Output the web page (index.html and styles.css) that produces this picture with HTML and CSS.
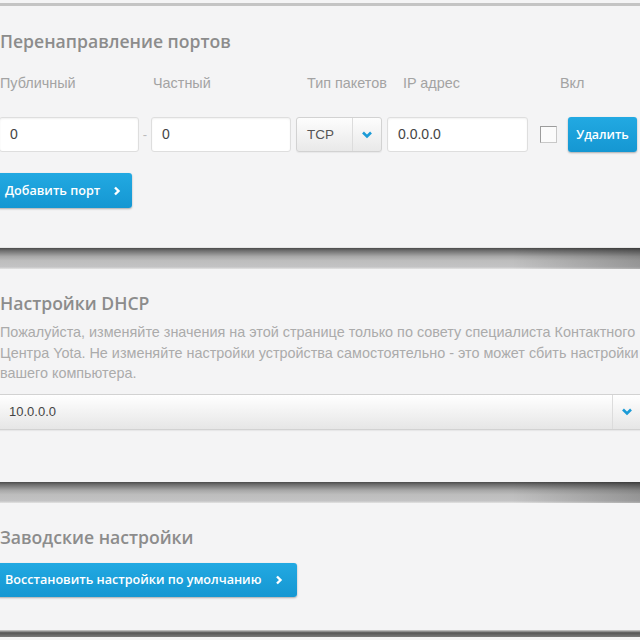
FILE: index.html
```html
<!DOCTYPE html>
<html lang="ru">
<head>
  <meta charset="UTF-8">
  <title>Настройки</title>
  <link rel="stylesheet" href="styles.css">
</head>
<body>

  <div class="top-line"></div>

  <!-- Port forwarding -->
  <section class="panel panel-ports">
    <h2 class="panel-title">Перенаправление портов</h2>

    <div class="labels">
      <span class="lbl lbl-public">Публичный</span>
      <span class="lbl lbl-private">Частный</span>
      <span class="lbl lbl-type">Тип пакетов</span>
      <span class="lbl lbl-ip">IP адрес</span>
      <span class="lbl">Вкл</span>
    </div>

    <div class="port-row">
      <div class="field field-port">0</div>
      <span class="dash">-</span>
      <div class="field field-port">0</div>
      <div class="select select-proto">
        <span class="select-value">TCP</span>
        <span class="select-arrow">
          <svg width="12" height="8" viewBox="0 0 12 8"><path d="M2 1.5 L6 5.5 L10 1.5" fill="none" stroke="#1b9bd7" stroke-width="2.6"/></svg>
        </span>
      </div>
      <div class="field field-ip">0.0.0.0</div>
      <span class="checkbox"></span>
      <button class="btn btn-small">Удалить</button>
    </div>

    <button class="btn btn-arrow">Добавить порт
      <svg width="8" height="10" viewBox="0 0 8 10"><path d="M2 1.5 L5.5 5 L2 8.5" fill="none" stroke="#fff" stroke-width="2.4"/></svg>
    </button>
  </section>

  <div class="divider"></div>

  <!-- DHCP -->
  <section class="panel panel-dhcp">
    <h2 class="panel-title">Настройки DHCP</h2>
    <p class="note">Пожалуйста, изменяйте значения на этой странице только по совету специалиста Контактного Центра Yota. Не изменяйте настройки устройства самостоятельно - это может сбить настройки вашего компьютера.</p>
    <div class="select select-wide">
      <span class="select-value">10.0.0.0</span>
      <span class="select-arrow">
        <svg width="12" height="8" viewBox="0 0 12 8"><path d="M2 1.5 L6 5.5 L10 1.5" fill="none" stroke="#1b9bd7" stroke-width="2.6"/></svg>
      </span>
    </div>
  </section>

  <div class="divider"></div>

  <!-- Factory reset -->
  <section class="panel panel-reset">
    <h2 class="panel-title">Заводские настройки</h2>
    <button class="btn btn-arrow btn-reset">Восстановить настройки по умолчанию
      <svg width="8" height="10" viewBox="0 0 8 10"><path d="M2 1.5 L5.5 5 L2 8.5" fill="none" stroke="#fff" stroke-width="2.4"/></svg>
    </button>
  </section>

  <div class="bottom-line"></div>

</body>
</html>
```

FILE: styles.css
```css
body {
  margin: 0;
  background: #f4f4f5;
  font-family: "Liberation Sans", Arial, sans-serif;
  overflow: hidden;
}

.top-line {
  height: 3px;
  margin-top: 3px;
  background: #c4c4c4;
}

.panel-ports { padding: 23px 0 39px; border-bottom: 1px solid #e6e6e6; }
.panel-dhcp { padding: 22px 0 52px; }
.panel-reset { padding: 22px 0 33px; }

.panel-title {
  margin: 0;
  font-family: "Open Sans", sans-serif;
  font-weight: 600;
  font-size: 17.6px;
  line-height: 24px;
  color: #8c8c8c;
}

/* port forwarding */
.labels {
  display: flex;
  margin-top: 21px;
  font-size: 14.4px;
  line-height: 18px;
  color: #a3a3a3;
}
.lbl-public { width: 153px; }
.lbl-private { width: 154px; }
.lbl-type { width: 96px; }
.lbl-ip { width: 157px; }

.port-row {
  display: flex;
  align-items: center;
  margin: 25px 0 0 -1px;
  height: 35px;
}

.field {
  box-sizing: border-box;
  height: 35px;
  padding: 0 10px;
  background: #fff;
  border: 1px solid #dedede;
  border-radius: 3px;
  box-shadow: inset 0 1px 2px rgba(0,0,0,.06);
  font-size: 14px;
  line-height: 33px;
  color: #444;
}
.field-port { width: 140px; }
.field-ip { width: 141px; margin-left: 5px; }

.dash {
  width: 12px;
  text-align: center;
  color: #bbb;
  font-size: 13px;
}

.select {
  box-sizing: border-box;
  display: flex;
  align-items: stretch;
  height: 35px;
  background: linear-gradient(#fdfdfd, #e9e9e9);
  border: 1px solid #d2d2d2;
  border-radius: 3px;
  box-shadow: 0 1px 1px rgba(0,0,0,.05);
  font-size: 13.5px;
  color: #555;
}
.select-proto { width: 86px; margin-left: 5px; }
.select-value {
  flex: 1;
  padding-left: 10px;
  line-height: 33px;
}
.select-arrow {
  width: 28px;
  display: flex;
  align-items: center;
  justify-content: center;
  border-left: 1px solid #dcdcdc;
}

.checkbox {
  box-sizing: border-box;
  width: 17px;
  height: 17px;
  margin-left: 12px;
  background: #fbfbfb;
  border: 1px solid #c8c8c8;
  border-top-color: #9c9c9c;
  border-left-color: #9c9c9c;
}

.btn {
  box-sizing: border-box;
  height: 35px;
  border: 0;
  border-radius: 3px;
  background: linear-gradient(#22a9e2, #1597d2);
  box-shadow: 0 1px 2px rgba(0,0,0,.3);
  color: #fff;
  font-family: "Open Sans", sans-serif;
  font-weight: 600;
  font-size: 12.6px;
  cursor: pointer;
}
.btn-small {
  width: 69px;
  margin-left: 11px;
  padding: 0;
  font-size: 12.4px;
}
.btn-arrow {
  display: flex;
  align-items: center;
  gap: 13px;
  margin: 21px 0 0 -3px;
  padding: 0 11px 0 8px;
}
.btn-reset {
  margin-top: 14px;
  height: 34px;
  padding-right: 14px;
  gap: 14px;
}

/* dividers between panels */
.divider {
  height: 21px;
  background:
    linear-gradient(to right, rgba(0,0,0,0) 80%, rgba(0,0,0,.22)),
    linear-gradient(#4b4b4b 0, #6d6d6d 12%, #a8a8a8 40%, #bdbdbd 60%, #c3c3c4 90%, #e3e3e3 100%);
}
.bottom-line {
  height: 7px;
  background: linear-gradient(#d0d0d0, #555 40%, #7a7a7a);
}

/* dhcp */
.note {
  margin: 7px 0 0;
  font-size: 14.4px;
  line-height: 20.5px;
  color: #ababab;
}
.select-wide {
  margin-top: 10px;
  height: 36px;
  border-left: 0;
  border-right: 0;
  border-radius: 0;
  background: linear-gradient(#ffffff, #e6e6e6);
  font-size: 13px;
  color: #444;
}
.select-wide .select-value { padding-left: 9px; line-height: 34px; }
.select-wide .select-arrow { width: 27px; }
```
